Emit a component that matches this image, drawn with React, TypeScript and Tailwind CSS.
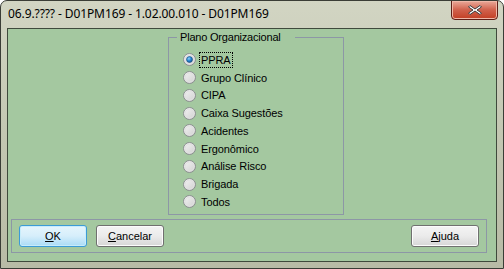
import React from "react";

const items = ["PPRA", "Grupo Clínico", "CIPA", "Caixa Sugestões", "Acidentes", "Ergonômico", "Análise Risco", "Brigada", "Todos"];

function Radio({ checked }: { checked: boolean }) {
  return (
    <svg width="13" height="13" viewBox="0 0 13 13" className="shrink-0">
      <defs>
        <linearGradient id="rg" x1="0" y1="0" x2="1" y2="1">
          <stop offset="0" stopColor="#f4f4f4" />
          <stop offset="1" stopColor="#cfcfcf" />
        </linearGradient>
        <radialGradient id="rb" cx="0.4" cy="0.35" r="0.7">
          <stop offset="0" stopColor="#8fd3f7" />
          <stop offset="0.5" stopColor="#2a8ad4" />
          <stop offset="1" stopColor="#0b4d8c" />
        </radialGradient>
      </defs>
      <circle cx="6.5" cy="6.5" r="6" fill="url(#rg)" stroke="#8a8f8f" strokeWidth="1" />
      <circle cx="6.5" cy="6.5" r="4.5" fill="none" stroke="#e0e0e0" strokeWidth="1" />
      {checked && <circle cx="6.5" cy="6.5" r="3" fill="url(#rb)" stroke="#1b4f80" strokeWidth="0.6" />}
    </svg>
  );
}

function Btn({ u, rest, def }: { u: string; rest: string; def?: boolean }) {
  return (
    <div
      className={
        "w-[68px] h-[22px] rounded-[3px] border flex items-center justify-center text-[11px] text-black " +
        (def
          ? "border-[#3c9bd6] bg-gradient-to-b from-[#e6f5fc] via-[#d6eefb] to-[#a9dbf6] shadow-[inset_0_0_0_1px_#c8ecfb]"
          : "border-[#707070] bg-gradient-to-b from-[#f4f4f4] via-[#ebebeb] to-[#d6d6d6] shadow-[inset_0_0_0_1px_#fcfcfc]")
      }
    >
      <span>
        <span className="underline">{u}</span>
        {rest}
      </span>
    </div>
  );
}

export default function App() {
  return (
    <div
      className="w-[504px] h-[269px] flex flex-col rounded-t-[7px] border border-[#3a3d36] bg-gradient-to-b from-[#d2d5c3] via-[#c3c7b2] to-[#b8bba6] overflow-hidden"
      style={{ fontFamily: '"Liberation Sans", Arial, sans-serif' }}
    >
      <div className="h-[27px] flex items-start relative">
        <div className="pl-[7px] pt-[5px] text-[12px] tracking-[-0.1px] text-black leading-[15px]" style={{ fontFamily: '"Noto Sans", "Liberation Sans", sans-serif' }}>
          06.9.???? - D01PM169 - 1.02.00.010 - D01PM169
        </div>
        <div className="absolute right-[5px] top-[-1px] w-[47px] h-[20px] rounded-b-[4px] border border-[#5e1f17] bg-gradient-to-b from-[#e9a99a] via-[#d0604b] to-[#c23d22] flex items-center justify-center shadow-[inset_0_0_0_1px_#f0b8a8]">
          <svg width="16" height="12" viewBox="0 0 16 12">
            <path d="M3 1.5 L8 5 L13 1.5 L14.5 3 L10 6 L14.5 9 L13 10.5 L8 7 L3 10.5 L1.5 9 L6 6 L1.5 3 Z" fill="#ffffff" stroke="#3d3d3d" strokeWidth="1" strokeLinejoin="round" />
          </svg>
        </div>
      </div>
      <div className="mx-[6px] h-[234px] border border-[#3f4a3c] bg-[#a4c8a0] flex flex-col">
        <div className="ml-[160px] mt-[8px] w-[176px] h-[178px] border border-[#8d97a6] relative pt-[13px] pl-[14px]">
          <span className="absolute left-[8px] top-[-8px] pl-[3px] pr-[14px] bg-[#a4c8a0] text-[11px] tracking-[-0.2px] leading-[14px] text-black">Plano Organizacional</span>
          {items.map((t, i) => (
            <div key={t} className="h-[17.75px] flex items-center gap-[4px] text-[11px] tracking-[-0.1px] text-black">
              <Radio checked={i === 0} />
              <span className={i === 0 ? "outline outline-1 outline-dotted outline-black px-[1px] leading-[14px]" : "px-[1px] leading-[14px]"}>{t}</span>
            </div>
          ))}
        </div>
        <div className="ml-[3px] mt-[4px] w-[476px] h-[34px] border border-[#8d97a6] flex items-center justify-between px-[7px]">
          <div className="flex gap-[9px]">
            <Btn u="O" rest="K" def />
            <Btn u="C" rest="ancelar" />
          </div>
          <Btn u="A" rest="juda" />
        </div>
      </div>
    </div>
  );
}
